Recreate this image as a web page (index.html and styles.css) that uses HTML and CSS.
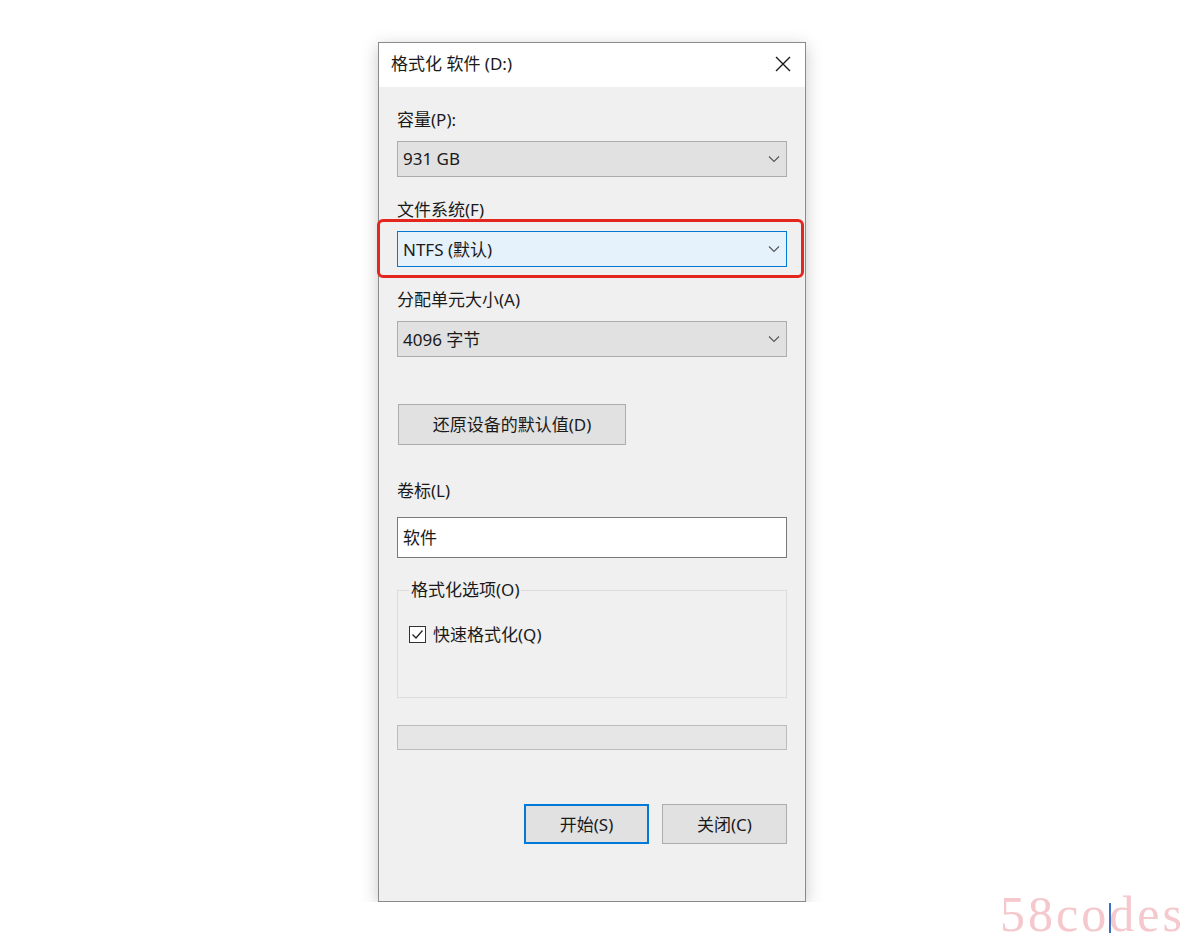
FILE: index.html
```html
<!DOCTYPE html>
<html lang="zh-CN">

<head>
    <meta charset="UTF-8">
    <meta name="viewport" content="width=device-width, initial-scale=1.0">
    <title>格式化 软件 (D:)</title>
    <link rel="stylesheet" href="styles.css">
</head>

<body>

    <div class="dialog">
        <!-- 标题栏 -->
        <div class="titlebar">
            <span class="title">格式化 软件 (D:)</span>
            <svg class="close" width="18" height="18" viewBox="0 0 18 18">
                <path d="M2 2 L16 16 M16 2 L2 16" stroke="#1a1a1a" stroke-width="1.4" fill="none" />
            </svg>
        </div>

        <div class="content">
            <div class="label">容量(P):</div>
            <div class="combo">
                <span>931 GB</span>
                <svg class="arrow" width="12" height="8" viewBox="0 0 12 8">
                    <path d="M1 1.5 L6 6.5 L11 1.5" stroke="#555" stroke-width="1.1" fill="none" />
                </svg>
            </div>

            <div class="label">文件系统(F)</div>
            <div class="combo active">
                <span>NTFS (默认)</span>
                <svg class="arrow" width="12" height="8" viewBox="0 0 12 8">
                    <path d="M1 1.5 L6 6.5 L11 1.5" stroke="#555" stroke-width="1.1" fill="none" />
                </svg>
                <div class="mark"></div>
            </div>

            <div class="label">分配单元大小(A)</div>
            <div class="combo">
                <span>4096 字节</span>
                <svg class="arrow" width="12" height="8" viewBox="0 0 12 8">
                    <path d="M1 1.5 L6 6.5 L11 1.5" stroke="#555" stroke-width="1.1" fill="none" />
                </svg>
            </div>

            <div class="btn restore">还原设备的默认值(D)</div>

            <div class="label vol">卷标(L)</div>
            <div class="textbox">软件</div>

            <fieldset class="options">
                <legend>格式化选项(O)</legend>
                <div class="check">
                    <svg class="box" width="17" height="17" viewBox="0 0 17 17">
                        <rect x="0.5" y="0.5" width="16" height="16" fill="#fff" stroke="#333" />
                        <path d="M3.5 8.5 L7 12 L13.5 4.5" stroke="#222" stroke-width="1.3" fill="none" />
                    </svg>
                    <span>快速格式化(Q)</span>
                </div>
            </fieldset>

            <div class="progress"></div>

            <div class="actions">
                <div class="btn primary">开始(S)</div>
                <div class="btn">关闭(C)</div>
            </div>
        </div>
    </div>

    <!-- 水印 -->
    <div class="watermark">58co<i class="caret"></i>des</div>

</body>

</html>
```

FILE: styles.css
```css
* {
    box-sizing: border-box;
}

body {
    margin: 0;
    background-color: white;
    font-family: "Noto Sans", "Noto Sans CJK SC", sans-serif;
    font-size: 17px;
    color: #1a1a1a;
}

.dialog {
    width: 428px;
    margin: 42px 0 0 378px;
    border: 1px solid #8a8a8a;
    background-color: #f0f0f0;
    box-shadow: 0 4px 16px rgba(0, 0, 0, 0.22);
}

.titlebar {
    height: 44px;
    background-color: white;
    display: flex;
    align-items: center;
    justify-content: space-between;
    padding: 0 13px 2px 12px;
}

.title {
    line-height: 20px;
}

.content {
    padding: 0 18px 57px 18px;
}

.label {
    height: 20px;
    line-height: 20px;
    margin-top: 23px;
}

.label.vol {
    margin-top: 36px;
}

.combo {
    position: relative;
    height: 36px;
    margin-top: 11px;
    background-color: #e1e1e1;
    border: 1px solid #adadad;
    display: flex;
    align-items: center;
    justify-content: space-between;
    padding: 0 6px 2px 5px;
}

.combo .arrow {
    margin-top: 2px;
}

.combo.active {
    background-color: #e5f1fb;
    border-color: #0078d7;
}

/* 红色标注框 */
.mark {
    position: absolute;
    left: -21px;
    right: -18px;
    top: -13px;
    bottom: -12px;
    border: 3px solid #e3271f;
    border-radius: 6px;
}

.btn {
    height: 40px;
    background-color: #e1e1e1;
    border: 1px solid #adadad;
    display: flex;
    justify-content: center;
    align-items: center;
    padding-bottom: 2px;
}

.btn.restore {
    width: 228px;
    height: 41px;
    margin: 47px 0 0 1px;
}

.textbox {
    height: 41px;
    margin-top: 16px;
    background-color: white;
    border: 1px solid #7a7a7a;
    display: flex;
    align-items: center;
    padding: 0 0 3px 5px;
}

.options {
    margin: 22px 0 0 0;
    padding: 0 11px 54px 11px;
    border: 1px solid #dcdcdc;
}

.options legend {
    padding: 0 2px;
    line-height: 20px;
}

.check {
    margin-top: 23px;
    height: 20px;
    display: flex;
    align-items: center;
    gap: 7px;
}

.check .box {
    flex-shrink: 0;
    margin-top: 2px;
}

.progress {
    height: 25px;
    margin-top: 27px;
    background-color: #e6e6e6;
    border: 1px solid #bcbcbc;
}

.actions {
    margin-top: 54px;
    display: flex;
    justify-content: flex-end;
    gap: 13px;
}

.actions .btn {
    width: 125px;
}

.btn.primary {
    border: 2px solid #0078d7;
}

.watermark {
    position: absolute;
    left: 1000px;
    top: 884px;
    font-family: "Liberation Serif", serif;
    font-size: 50px;
    letter-spacing: 3px;
    color: #f5c8cd;
    line-height: 60px;
}

.caret {
    display: inline-block;
    width: 2px;
    height: 30px;
    margin: 0 -2px 0 0;
    background-color: #3a6fc4;
    vertical-align: -2px;
}
```
